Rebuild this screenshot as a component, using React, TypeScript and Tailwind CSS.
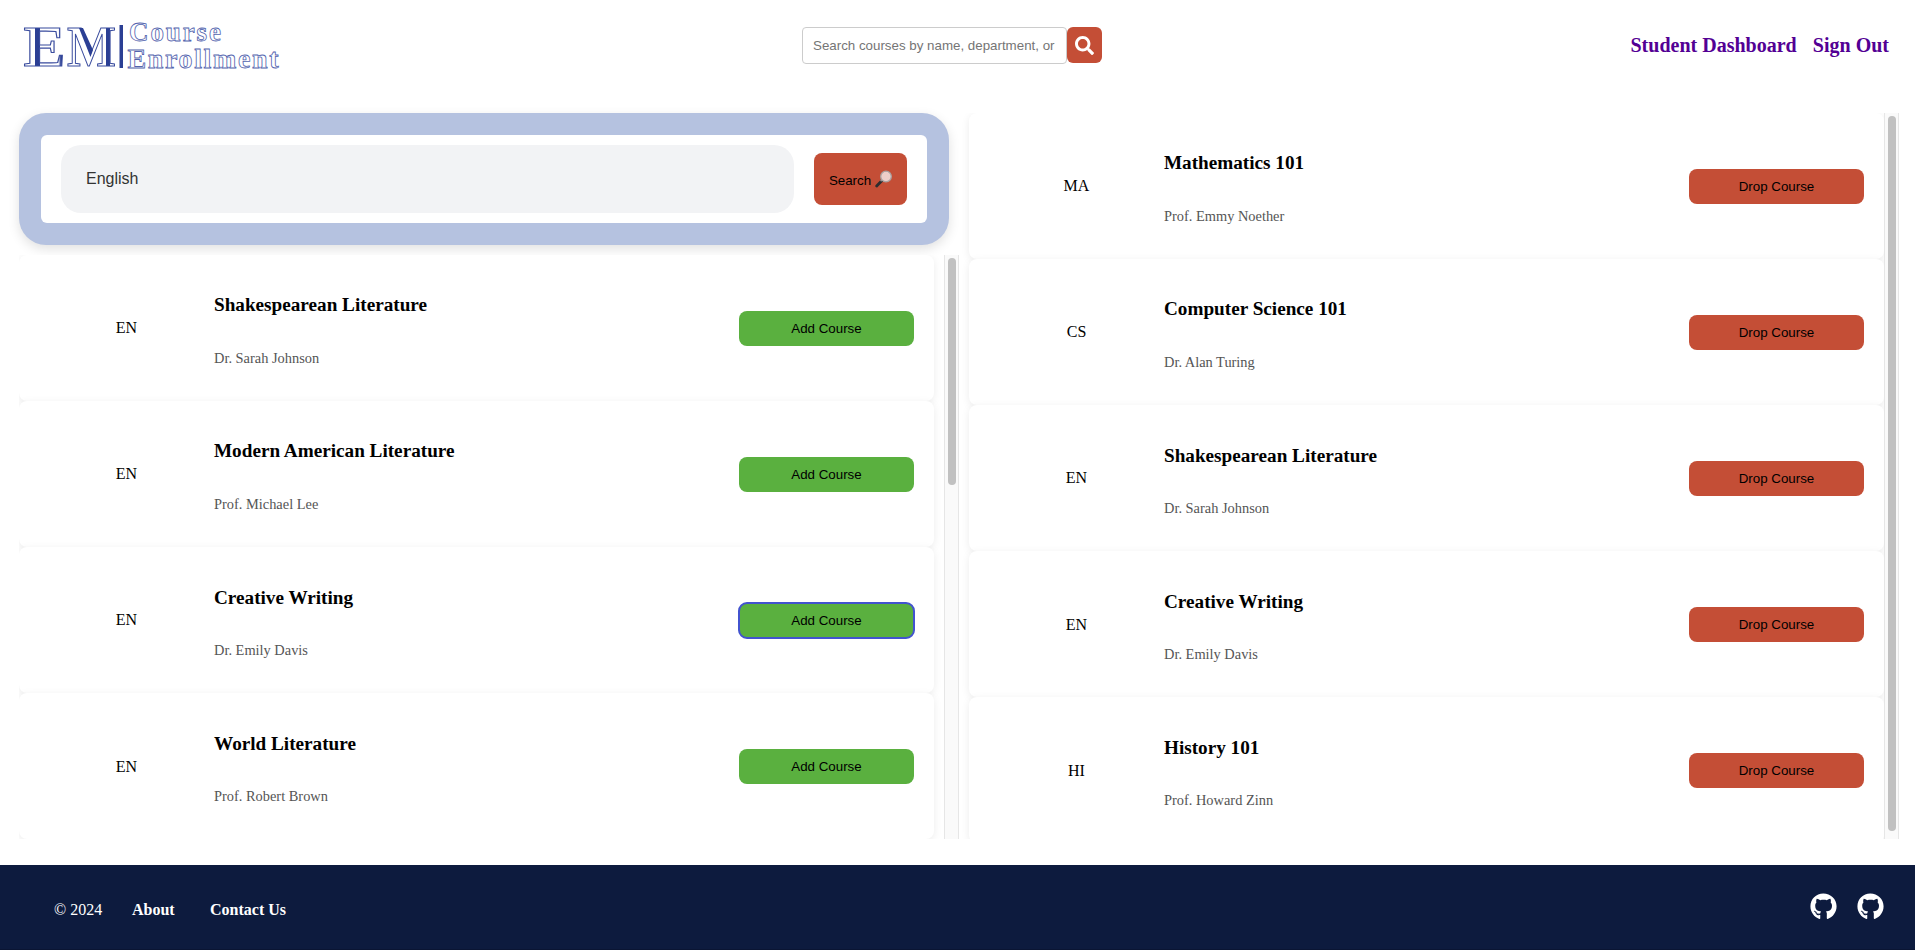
import { FaGithub, FaSearch } from "react-icons/fa";

type Course = { dept: string; title: string; prof: string; focused?: boolean };

const results: Course[] = [
  { dept: "EN", title: "Shakespearean Literature", prof: "Dr. Sarah Johnson" },
  { dept: "EN", title: "Modern American Literature", prof: "Prof. Michael Lee" },
  { dept: "EN", title: "Creative Writing", prof: "Dr. Emily Davis", focused: true },
  { dept: "EN", title: "World Literature", prof: "Prof. Robert Brown" },
];

const enrolled: Course[] = [
  { dept: "MA", title: "Mathematics 101", prof: "Prof. Emmy Noether" },
  { dept: "CS", title: "Computer Science 101", prof: "Dr. Alan Turing" },
  { dept: "EN", title: "Shakespearean Literature", prof: "Dr. Sarah Johnson" },
  { dept: "EN", title: "Creative Writing", prof: "Dr. Emily Davis" },
  { dept: "HI", title: "History 101", prof: "Prof. Howard Zinn" },
];

function Logo() {
  return (
    <svg
      width="300"
      height="92"
      viewBox="0 0 300 92"
      className="block shrink-0 font-['Liberation_Serif',serif] font-bold"
      aria-label="EM Course Enrollment"
    >
      <defs>
        <linearGradient id="inlayE" gradientUnits="userSpaceOnUse" x1="24" y1="0" x2="64" y2="0">
          <stop offset="0.28" stopColor="#fff" />
          <stop offset="0.28" stopColor="#2b3f94" />
          <stop offset="0.4" stopColor="#2b3f94" />
          <stop offset="0.4" stopColor="#fff" />
          <stop offset="0.86" stopColor="#fff" />
          <stop offset="0.92" stopColor="#2b3f94" />
        </linearGradient>
        <linearGradient id="inlayM" gradientUnits="userSpaceOnUse" x1="68" y1="0" x2="115" y2="0">
          <stop offset="0.8" stopColor="#fff" />
          <stop offset="0.8" stopColor="#2b3f94" />
          <stop offset="0.89" stopColor="#2b3f94" />
          <stop offset="0.89" stopColor="#fff" />
        </linearGradient>
      </defs>
      <g stroke="#3a4c9e" strokeWidth="1.1">
        <text x="23.500" y="65.500" fontSize="58" textLength="42" lengthAdjust="spacingAndGlyphs" fill="url(#inlayE)">
          E
        </text>
        <text x="67" y="65.500" fontSize="58" textLength="49" lengthAdjust="spacingAndGlyphs" fill="url(#inlayM)">
          M
        </text>
      </g>
      <path d="M79 28 L83 28 L93 50 L90.500 57Z" fill="#2b3f94" />
      <rect x="119.500" y="25" width="3.500" height="43" fill="#2b3f94" />
      <g fill="#fff" stroke="#5263ae" strokeWidth="0.8">
        <text x="129" y="41" fontSize="27" textLength="92" lengthAdjust="spacing">
          Course
        </text>
        <text x="127.500" y="68" fontSize="28" textLength="151" lengthAdjust="spacing">
          Enrollment
        </text>
      </g>
    </svg>
  );
}

function Magnifier() {
  return (
    <svg width="17" height="18" viewBox="0 0 17 18" className="block shrink-0">
      <path d="M1.700 16 L7 10.500" stroke="#2d2d2f" strokeWidth="2.800" strokeLinecap="round" />
      <path d="M5.500 11 L7.500 9.500" stroke="#8d8a8c" strokeWidth="1.800" />
      <circle cx="11" cy="6.500" r="5.300" fill="#edcdc8" stroke="#a9a2a2" strokeWidth="1.300" />
    </svg>
  );
}

function CourseRow({ course, drop }: { course: Course; drop?: boolean }) {
  return (
    <li className="mb-[0.375px] flex h-[145.71875px] w-[915px] shrink-0 rounded-lg bg-white shadow-[0_2px_8px_rgba(0,0,0,0.08)]">
      <div className="w-[195px] pt-[61.25px] pl-5 text-center text-[16px] leading-[24px]">
        <span className="block w-[175px]">{course.dept}</span>
      </div>
      <div className="grow pt-[38.34px]">
        <h3 className="text-[19.2px] leading-[24px] font-bold">{course.title}</h3>
        <p className="mt-[30.7px] text-[14.4px] leading-[20px] text-[#555]">{course.prof}</p>
      </div>
      <button
        className={`mt-[56px] mr-5 h-[35px] w-[175px] rounded-lg font-['Liberation_Sans',sans-serif] text-[13.33px] ${
          drop ? "bg-[#c44e36]" : "bg-[#5ab03f]"
        } ${course.focused ? "outline-2 -outline-offset-1 outline-[#4253cf]" : ""}`}
      >
        {drop ? "Drop Course" : "Add Course"}
      </button>
    </li>
  );
}

function ScrollTrack({ full }: { full?: boolean }) {
  return (
    <div className="w-[15px] shrink-0 self-stretch border-x border-[#e6e6e6] bg-[#fafafa] pt-[3px] pl-[3px]">
      <div className={`w-2 rounded-full bg-[#c1c1c1] ${full ? "h-[715px]" : "h-[227px]"}`} />
    </div>
  );
}

export default function App() {
  return (
    <div className="flex h-[950px] w-[1915px] flex-col overflow-hidden bg-white font-['Liberation_Serif',serif] text-black">
      <header className="flex h-[92px] shrink-0 pr-[26px]">
        <Logo />
        <div className="ml-[502px] flex items-start pt-[27px] font-['Liberation_Sans',sans-serif]">
          <div className="h-[37px] w-[265px] overflow-hidden rounded border border-[#ccc] pl-[10px] text-[13.33px] leading-[36px] whitespace-nowrap text-[#757575]">
            Search courses by name, department, or
          </div>
          <button className="flex h-9 w-[35px] items-center justify-center rounded-md bg-[#c44e36] text-white">
            <FaSearch size={19} />
          </button>
        </div>
        <nav className="ml-auto flex w-[258.5px] justify-between pt-[33px] text-[20px] leading-[24px] font-bold text-[#530094]">
          <a>Student Dashboard</a>
          <a>Sign Out</a>
        </nav>
      </header>

      <main className="flex h-[773px] pt-[21px] pl-[19px]">
        <section className="flex h-[726px] w-[940px] shrink-0 flex-col">
          <div className="h-[132px] w-[930px] shrink-0 rounded-[27px] bg-[#b5c2e0] p-[22px] shadow-[0_4px_12px_rgba(0,0,0,0.12)]">
            <div className="flex h-[88px] items-center gap-5 rounded-md bg-white px-5">
              <div className="h-[68px] w-[733px] rounded-[20px] bg-[#f2f3f5] px-[25px] font-['Liberation_Sans',sans-serif] text-[16px] leading-[67px] text-[#333]">
                English
              </div>
              <button className="flex h-[52px] w-[93px] items-center justify-center gap-1 rounded-lg bg-[#c44e36] font-['Liberation_Sans',sans-serif] text-[13.33px]">
                <span className="pt-[3px]">Search</span>
                <Magnifier />
              </button>
            </div>
          </div>
          <div className="mt-[10px] flex h-[584px] bg-white">
            <ul className="flex w-[925px] flex-col overflow-hidden">
              {results.map((c) => (
                <CourseRow key={c.title} course={c} />
              ))}
            </ul>
            <ScrollTrack />
          </div>
        </section>

        <section className="flex h-[726px] w-[940px] shrink-0 overflow-hidden">
          <ul className="flex w-[925px] flex-col overflow-hidden pl-[10px]">
            {enrolled.map((c) => (
              <CourseRow key={c.title} course={c} drop />
            ))}
          </ul>
          <ScrollTrack full />
        </section>
      </main>

      <footer className="flex h-[85px] shrink-0 justify-between border-b border-[#0a1533] bg-[#0d1b3e] pr-[31px] pl-[54px] text-[16px] text-white">
        <div className="flex pt-[33px] leading-[24px]">
          <span className="w-[78px]">© 2024</span>
          <a className="w-[78px] font-bold">About</a>
          <a className="font-bold">Contact Us</a>
        </div>
        <div className="flex gap-5 pt-[28px]">
          <FaGithub size={27} />
          <FaGithub size={27} />
        </div>
      </footer>
    </div>
  );
}
